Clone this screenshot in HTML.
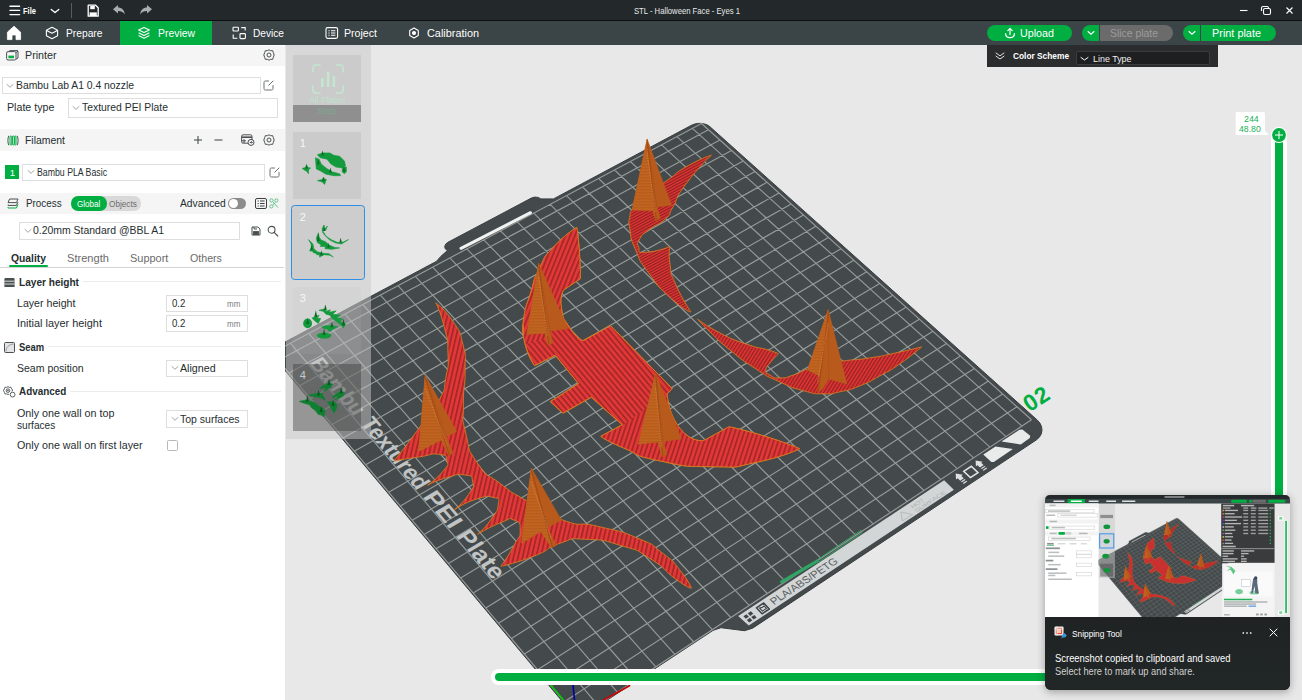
<!DOCTYPE html>
<html lang="en">
<head>
<meta charset="utf-8">
<title>STL - Halloween Face - Eyes 1</title>
<style>
*{box-sizing:border-box;margin:0;padding:0}
html,body{width:1302px;height:700px;overflow:hidden;background:#e8e8e8;font-family:"Liberation Sans",sans-serif;color:#262e30}
.abs{position:absolute}
#titlebar{position:absolute;left:0;top:0;width:1302px;height:21px;background:#23292b;border-bottom:1px solid #0c0e0f}
#tabbar{position:absolute;left:0;top:21px;width:1302px;height:24px;background:#3b4446}
#tabbar .tab{position:absolute;top:0;height:24px;line-height:24px;color:#fff;font-size:11.5px;white-space:nowrap}
#sidebar{position:absolute;left:0;top:45px;width:285px;height:655px;background:#fff}
#sideline{position:absolute;left:284px;top:45px;width:1px;height:655px;background:#fdfdfd}
#canvas{position:absolute;left:285px;top:45px;width:1017px;height:655px;background:#e8e8e8;overflow:hidden}
.hdr{position:absolute;left:0;width:285px;background:#f5f5f5}
.t{position:absolute;white-space:nowrap;font-size:11.5px;line-height:14px;color:#262e30}
.b{font-weight:bold}
.box{position:absolute;border:1px solid #dedede;background:#fff}
.g{color:#6b6b6b}
svg{position:absolute;overflow:visible}
</style>
</head>
<body>
<div id="titlebar"></div><div id="tabbar"></div>
<svg width="30" height="21" style="left:0;top:0" viewBox="0 0 30 21"><g stroke="#fff" stroke-width="1.4" stroke-linecap="round"><path d="M10 6.2H19.6M10 10.4H19.6M10 14.6H19.6"/></g></svg>
<div class="t" style="left:22.5px;top:4.9px;font-size:9.5px;line-height:12px;transform:scaleX(0.794);transform-origin:0 50%;font-weight:bold;color:#ffffff;">File</div>
<svg width="12" height="8" style="left:49px;top:7px" viewBox="0 0 12 8"><path d="M2.2 2.4L6 5.6L9.800 2.4" stroke="#fff" stroke-width="1.3" fill="none" stroke-linecap="round" stroke-linejoin="round"/></svg>
<div class="abs" style="left:71px;top:3px;width:1px;height:15px;background:#555d5f"></div>
<svg width="14" height="14" style="left:86px;top:4px" viewBox="0 0 14 14"><path d="M2.2 1.2H9.6L12.2 3.8V12.2H2.2Z" fill="none" stroke="#fff" stroke-width="1.3" stroke-linejoin="round"/><rect x="4.2" y="1.8" width="4.6" height="3.4" fill="#fff"/><rect x="3.6" y="8.4" width="7.2" height="3.6" fill="#fff"/></svg>
<svg width="14" height="12" style="left:112px;top:4px" viewBox="0 0 14 12"><path d="M1 5.2L6 1V3.6C9.6 3.6 12.4 5.8 12.8 10.4C11.2 7.8 9 7 6 7V9.6Z" fill="#a9afb1"/></svg>
<svg width="14" height="12" style="left:139px;top:4px" viewBox="0 0 14 12"><path d="M13 5.2L8 1V3.6C4.4 3.6 1.6 5.8 1.2 10.4C2.8 7.8 5 7 8 7V9.6Z" fill="#a9afb1"/></svg>
<div class="t" style="left:634.0px;top:4.9px;font-size:9.5px;line-height:12px;transform:scaleX(0.808);transform-origin:0 50%;color:#e8eaea;">STL - Halloween Face - Eyes 1</div>
<svg width="70" height="21" style="left:1232px;top:0" viewBox="0 0 70 21"><g stroke="#fff" stroke-width="1.1" fill="none"><path d="M8 10.5H15.5"/><rect x="31.5" y="8.5" width="7" height="6" rx="1.5"/><path d="M29.5 11V8C29.5 7 30 6.5 31 6.5H35C36 6.500 36.500 7 36.500 8"/><path d="M54.500 7.500L60.500 13.500M60.500 7.500L54.500 13.500"/></g></svg>
<svg width="16" height="16" style="left:6px;top:25px" viewBox="0 0 16 16"><path d="M8 1.200L14.600 7.200V14.600H10V10H6V14.600H1.400V7.200Z" fill="#fff" stroke="#fff" stroke-width="0.800" stroke-linejoin="round"/></svg>
<svg width="14" height="14" style="left:45px;top:26px" viewBox="0 0 14 14"><g fill="none" stroke="#fff" stroke-width="1.100" stroke-linejoin="round"><path d="M7 1.300L12.600 4.200V9.800L7 12.700L1.400 9.800V4.200Z"/><path d="M1.600 4.400L7 7.200L12.400 4.400"/></g></svg>
<div class="t" style="left:65.5px;top:25.9px;font-size:11.5px;line-height:15px;transform:scaleX(0.892);transform-origin:0 50%;color:#ffffff;">Prepare</div>
<div class="abs" style="left:120px;top:21px;width:92px;height:24px;background:#00ae42"></div>
<svg width="14" height="14" style="left:137px;top:26px" viewBox="0 0 14 14"><g fill="none" stroke="#fff" stroke-width="1.100" stroke-linejoin="round"><path d="M7 1.400L12.400 4L7 6.600L1.600 4Z"/><path d="M1.600 6.800L7 9.400L12.400 6.800"/><path d="M1.600 9.600L7 12.200L12.400 9.600"/></g></svg>
<div class="t" style="left:157.5px;top:25.9px;font-size:11.5px;line-height:15px;transform:scaleX(0.905);transform-origin:0 50%;color:#ffffff;">Preview</div>
<svg width="15" height="14" style="left:232px;top:26px" viewBox="0 0 15 14"><g fill="none" stroke="#fff" stroke-width="1.100"><rect x="1" y="1.200" width="5.400" height="3.800" rx="0.800"/><rect x="8" y="7.600" width="5.400" height="5" rx="0.800"/><path d="M9.200 1.600H13.200V4.600M1.200 8.400V12.200H5.400"/></g></svg>
<div class="t" style="left:252.5px;top:25.9px;font-size:11.5px;line-height:15px;transform:scaleX(0.882);transform-origin:0 50%;color:#ffffff;">Device</div>
<svg width="14" height="14" style="left:325px;top:26px" viewBox="0 0 14 14"><g fill="none" stroke="#fff" stroke-width="1.100"><rect x="1" y="1.600" width="11.600" height="10.800" rx="1.600"/><path d="M3.400 4.800H4.600M6 4.800H10.400M3.400 7H4.600M6 7H10.400M3.400 9.200H4.600M6 9.200H10.400"/></g></svg>
<div class="t" style="left:343.5px;top:25.9px;font-size:11.5px;line-height:15px;transform:scaleX(0.922);transform-origin:0 50%;color:#ffffff;">Project</div>
<svg width="12" height="12" style="left:408px;top:27px" viewBox="0 0 12 12"><g fill="none" stroke="#fff" stroke-width="1.100"><path d="M6 1L10.300 3.500V8.500L6 11L1.700 8.500V3.500Z" stroke-linejoin="round"/><circle cx="6" cy="6" r="1.500" fill="#fff"/></g></svg>
<div class="t" style="left:426.5px;top:25.9px;font-size:11.5px;line-height:15px;transform:scaleX(0.946);transform-origin:0 50%;color:#ffffff;">Calibration</div>
<div class="abs" style="left:987px;top:25px;width:85px;height:16px;border-radius:8px;background:#00ae42"></div>
<svg width="12" height="12" style="left:1004px;top:27px" viewBox="0 0 12 12"><g fill="none" stroke="#fff" stroke-width="1.200" stroke-linecap="round" stroke-linejoin="round"><path d="M6 7.500V1.600M3.800 3.600L6 1.400L8.200 3.600"/><path d="M1.600 6.500C1.600 9.200 3.400 10.600 6 10.600C8.600 10.600 10.400 9.200 10.400 6.500"/></g></svg>
<div class="t" style="left:1019.5px;top:25.9px;font-size:11.5px;line-height:15px;transform:scaleX(0.933);transform-origin:0 50%;color:#ffffff;">Upload</div>
<div class="abs" style="left:1082px;top:25px;width:17px;height:16px;border-radius:8px 0 0 8px;background:#00ae42"></div>
<svg width="8" height="6" style="left:1087px;top:30px" viewBox="0 0 8 6"><path d="M1 1.500L4 4.200L7 1.500" stroke="#fff" stroke-width="1.100" fill="none" stroke-linecap="round"/></svg>
<div class="abs" style="left:1100px;top:25px;width:73px;height:16px;border-radius:0 8px 8px 0;background:#6b6b6b"></div>
<div class="t" style="left:1109.5px;top:25.9px;font-size:11.5px;line-height:15px;transform:scaleX(0.905);transform-origin:0 50%;color:#9c9c9c;">Slice plate</div>
<div class="abs" style="left:1183px;top:25px;width:17px;height:16px;border-radius:8px 0 0 8px;background:#00ae42"></div>
<svg width="8" height="6" style="left:1188px;top:30px" viewBox="0 0 8 6"><path d="M1 1.500L4 4.200L7 1.500" stroke="#fff" stroke-width="1.100" fill="none" stroke-linecap="round"/></svg>
<div class="abs" style="left:1201px;top:25px;width:75px;height:16px;border-radius:0 8px 8px 0;background:#00ae42"></div>
<div class="t" style="left:1211.5px;top:25.9px;font-size:11.5px;line-height:15px;transform:scaleX(0.946);transform-origin:0 50%;color:#ffffff;">Print plate</div>
<div id="sidebar"></div>
<div class="hdr" style="top:46px;height:20px"></div>
<svg width="13" height="11" style="left:6px;top:49.500px" viewBox="0 0 13 11"><g fill="none" stroke="#4a5052" stroke-width="1"><rect x="0.600" y="1.600" width="9.400" height="8.400" rx="1.500"/><path d="M10 2.600L12 1.200V8L10 9.200"/><path d="M2.600 1.600L4 0.600H12"/></g><rect x="2.400" y="5.600" width="5.600" height="2.600" fill="#00ae42"/></svg>
<div class="t" style="left:24.5px;top:47.6px;font-size:11.5px;line-height:15px;transform:scaleX(0.930);transform-origin:0 50%;">Printer</div>
<svg width="12" height="12" style="left:263px;top:48.7px" viewBox="0 0 12 12"><g fill="none" stroke="#4a5052" stroke-width="1"><path d="M6 0.800L7.700 1.700L9.700 1.700L10.300 3.600L11.200 6L10.300 8.400L9.700 10.300L7.700 10.300L6 11.200L4.300 10.300L2.300 10.300L1.700 8.400L0.800 6L1.700 3.600L2.300 1.700L4.300 1.700Z" stroke-linejoin="round"/><circle cx="6" cy="6" r="2"/></g></svg>
<div class="box" style="left:2px;top:77px;width:259px;height:17px;"></div>
<svg width="8" height="6" style="left:6px;top:82.5px" viewBox="0 0 8 6"><path d="M1 1.500L4 4.300L7 1.500" stroke="#9a9a9a" stroke-width="0.9" fill="none" stroke-linecap="round"/></svg>
<div class="t" style="left:16.0px;top:78.3px;font-size:11.5px;line-height:15px;transform:scaleX(0.900);transform-origin:0 50%;">Bambu Lab A1 0.4 nozzle</div>
<svg width="11" height="11" style="left:263px;top:80px" viewBox="0 0 11 11"><g fill="none" stroke="#6a7072" stroke-width="1" stroke-linecap="round"><path d="M5.500 1H2.500C1.500 1 1 1.500 1 2.500V8.500C1 9.500 1.500 10 2.500 10H8.500C9.500 10 10 9.500 10 8.500V5.500"/><path d="M5.800 5.200L10 1"/></g></svg>
<div class="t" style="left:6.7px;top:100.4px;font-size:11.5px;line-height:15px;transform:scaleX(0.927);transform-origin:0 50%;">Plate type</div>
<div class="box" style="left:67.5px;top:97.5px;width:210.5px;height:20px;"></div>
<svg width="8" height="6" style="left:72px;top:104.5px" viewBox="0 0 8 6"><path d="M1 1.500L4 4.300L7 1.500" stroke="#9a9a9a" stroke-width="0.9" fill="none" stroke-linecap="round"/></svg>
<div class="t" style="left:82.4px;top:100.4px;font-size:11.5px;line-height:15px;transform:scaleX(0.903);transform-origin:0 50%;">Textured PEI Plate</div>
<div class="hdr" style="top:129px;height:22px"></div>
<svg width="12" height="11" style="left:6.500px;top:134.500px" viewBox="0 0 12 11"><g fill="none" stroke-width="1"><path d="M1.800 0.800C0.600 3 0.600 8 1.800 10.200M10.200 0.800C11.400 3 11.400 8 10.200 10.200" stroke="#4a5052"/><rect x="3" y="1" width="1.800" height="9" rx="0.900" stroke="#00ae42"/><rect x="5.400" y="1" width="1.800" height="9" rx="0.900" stroke="#00ae42"/><rect x="7.700" y="1" width="1.300" height="9" rx="0.600" stroke="#00ae42"/></g></svg>
<div class="t" style="left:24.5px;top:132.7px;font-size:11.5px;line-height:15px;transform:scaleX(0.907);transform-origin:0 50%;">Filament</div>
<svg width="30" height="10" style="left:193px;top:135px" viewBox="0 0 30 10"><g stroke="#3a4042" stroke-width="1"><path d="M1 5H9M5 1V9M21.500 5H29.500"/></g></svg>
<svg width="14" height="12" style="left:241px;top:134px" viewBox="0 0 14 12"><g fill="none" stroke="#4a5052" stroke-width="1"><rect x="0.600" y="0.800" width="10.400" height="8.400" rx="1.500"/><path d="M0.600 3.200H11" stroke-width="1.600"/><path d="M3 5.200V9M0.800 6.800H5"/><circle cx="10" cy="8.400" r="3" fill="#f5f5f5"/><path d="M8.800 8.400H11.200M10.400 7.400L11.300 8.400L10.400 9.400"/></g></svg>
<svg width="12" height="12" style="left:263px;top:134px" viewBox="0 0 12 12"><g fill="none" stroke="#4a5052" stroke-width="1"><path d="M6 0.800L7.700 1.700L9.700 1.700L10.300 3.600L11.200 6L10.300 8.400L9.700 10.300L7.700 10.300L6 11.200L4.300 10.300L2.300 10.300L1.700 8.400L0.800 6L1.700 3.600L2.300 1.700L4.300 1.700Z" stroke-linejoin="round"/><circle cx="6" cy="6" r="2"/></g></svg>
<div class="abs" style="left:5px;top:165px;width:14px;height:14px;background:#00ae42"></div>
<div class="t" style="left:9.8px;top:166.7px;font-size:9.5px;line-height:12px;color:#fff;">1</div>
<div class="box" style="left:22px;top:163.5px;width:243px;height:17px;"></div>
<svg width="8" height="6" style="left:26.5px;top:169px" viewBox="0 0 8 6"><path d="M1 1.500L4 4.300L7 1.500" stroke="#9a9a9a" stroke-width="0.9" fill="none" stroke-linecap="round"/></svg>
<div class="t" style="left:36.7px;top:165.4px;font-size:10.5px;line-height:14px;transform:scaleX(0.833);transform-origin:0 50%;">Bambu PLA Basic</div>
<svg width="11" height="11" style="left:268.5px;top:166.5px" viewBox="0 0 11 11"><g fill="none" stroke="#6a7072" stroke-width="1" stroke-linecap="round"><path d="M5.500 1H2.500C1.500 1 1 1.500 1 2.500V8.500C1 9.500 1.500 10 2.500 10H8.500C9.500 10 10 9.500 10 8.500V5.500"/><path d="M5.800 5.200L10 1"/></g></svg>
<div class="hdr" style="top:193px;height:20.500px"></div>
<svg width="12" height="11" style="left:7px;top:197.500px" viewBox="0 0 12 11"><g fill="none" stroke-width="1" stroke-linejoin="round"><path d="M2.600 1H11L9.400 4.600H1Z" stroke="#4a5052"/><path d="M1 6.600V7.400H9.400L11 4" stroke="#4a5052"/><path d="M1 9.200V10H9.400L11 6.400" stroke="#00ae42"/></g></svg>
<div class="t" style="left:25.6px;top:195.9px;font-size:11.5px;line-height:15px;transform:scaleX(0.857);transform-origin:0 50%;">Process</div>
<div class="abs" style="left:71px;top:196px;width:70px;height:14.500px;border-radius:7.250px;background:#d9d9d9"></div>
<div class="abs" style="left:71px;top:196px;width:36px;height:14.500px;border-radius:7.250px;background:#00ae42"></div>
<div class="t" style="left:77.3px;top:197.6px;font-size:9.5px;line-height:12px;transform:scaleX(0.852);transform-origin:0 50%;color:#fff;">Global</div>
<div class="t" style="left:108.5px;top:197.6px;font-size:9.5px;line-height:12px;transform:scaleX(0.863);transform-origin:0 50%;color:#6b6b6b;">Objects</div>
<div class="t" style="left:180.4px;top:195.9px;font-size:11.5px;line-height:15px;transform:scaleX(0.894);transform-origin:0 50%;">Advanced</div>
<div class="abs" style="left:227.500px;top:198px;width:18.500px;height:11px;border-radius:5.500px;background:#8c8c8c"></div>
<div class="abs" style="left:228.500px;top:199px;width:9px;height:9px;border-radius:4.500px;background:#fff"></div>
<svg width="12" height="11" style="left:255px;top:198px" viewBox="0 0 12 11"><g fill="none" stroke="#3a4042" stroke-width="1"><rect x="0.500" y="0.500" width="11" height="10" rx="1.500"/><path d="M2.600 3H3.800M5 3H9.600M2.600 5.500H3.800M5 5.500H9.600M2.600 8H3.800M5 8H9.600"/></g></svg>
<svg width="10" height="11" style="left:269px;top:198px" viewBox="0 0 10 11"><g fill="none" stroke="#58be80" stroke-width="0.900"><circle cx="2.400" cy="2.400" r="1.600"/><circle cx="7.400" cy="2.400" r="1.600"/><circle cx="2.400" cy="8.400" r="1.600"/><path d="M4 4L9 9.600M6 4.400L4 7"/></g></svg>
<div class="box" style="left:19.4px;top:221.5px;width:220.6px;height:18px;"></div>
<svg width="8" height="6" style="left:23.5px;top:227.5px" viewBox="0 0 8 6"><path d="M1 1.500L4 4.300L7 1.500" stroke="#9a9a9a" stroke-width="0.9" fill="none" stroke-linecap="round"/></svg>
<div class="t" style="left:33.4px;top:223.4px;font-size:11.5px;line-height:15px;transform:scaleX(0.908);transform-origin:0 50%;">0.20mm Standard @BBL A1</div>
<svg width="10" height="10" style="left:251px;top:226px" viewBox="0 0 10 10"><g fill="none" stroke="#4a5052" stroke-width="1"><path d="M1 1H7L9 3V9H1Z" stroke-linejoin="round"/><rect x="2.600" y="5.600" width="4.800" height="3" fill="#4a5052"/><path d="M3 1.200V3H6"/></g></svg>
<svg width="12" height="12" style="left:267px;top:225px" viewBox="0 0 12 12"><g fill="none" stroke="#4a5052" stroke-width="1.100" stroke-linecap="round"><circle cx="4.600" cy="4.800" r="3.400"/><path d="M7.200 7.400L10.800 11"/></g></svg>
<div class="t" style="left:10.7px;top:250.6px;font-size:11.5px;line-height:15px;transform:scaleX(0.898);transform-origin:0 50%;font-weight:bold;">Quality</div>
<div class="abs" style="left:9px;top:264.500px;width:39px;height:2.200px;background:#00ae42;border-radius:1px"></div>
<div class="t" style="left:66.8px;top:250.6px;font-size:11.5px;line-height:15px;transform:scaleX(0.964);transform-origin:0 50%;color:#6b6b6b;">Strength</div>
<div class="t" style="left:129.8px;top:250.6px;font-size:11.5px;line-height:15px;transform:scaleX(0.953);transform-origin:0 50%;color:#6b6b6b;">Support</div>
<div class="t" style="left:190.4px;top:250.6px;font-size:11.5px;line-height:15px;transform:scaleX(0.924);transform-origin:0 50%;color:#6b6b6b;">Others</div>
<div class="abs" style="left:0;top:267px;width:284px;height:1px;background:#d4d4d4"></div>
<svg width="11" height="11" style="left:4px;top:276.500px" viewBox="0 0 11 11"><path d="M1.500 1H9.500C10.300 1 10.600 1.600 10.600 2.400V10H0.400V2.400C0.400 1.600 0.700 1 1.500 1Z" fill="#4a5052"/><path d="M0.400 4.200H10.600M0.400 7H10.600" stroke="#fff" stroke-width="0.800"/></svg>
<div class="t" style="left:18.5px;top:274.7px;font-size:11.5px;line-height:15px;transform:scaleX(0.877);transform-origin:0 50%;font-weight:bold;">Layer height</div>
<div class="abs" style="left:82.500px;top:281px;width:198.500px;height:1px;background:#ececec"></div>
<div class="t" style="left:16.9px;top:295.8px;font-size:11.5px;line-height:15px;transform:scaleX(0.923);transform-origin:0 50%;">Layer height</div>
<div class="box" style="left:166px;top:294.5px;width:81.5px;height:17px;"></div>
<div class="t" style="left:171.5px;top:295.9px;font-size:11.5px;line-height:15px;transform:scaleX(0.838);transform-origin:0 50%;">0.2</div>
<div class="t" style="left:227.2px;top:298.9px;font-size:8.5px;line-height:11px;transform:scaleX(0.939);transform-origin:0 50%;color:#7a7a7a;">mm</div>
<div class="t" style="left:16.9px;top:316.3px;font-size:11.5px;line-height:15px;transform:scaleX(0.949);transform-origin:0 50%;">Initial layer height</div>
<div class="box" style="left:166px;top:314.8px;width:81.5px;height:17px;"></div>
<div class="t" style="left:171.5px;top:316.3px;font-size:11.5px;line-height:15px;transform:scaleX(0.838);transform-origin:0 50%;">0.2</div>
<div class="t" style="left:227.2px;top:319.3px;font-size:8.5px;line-height:11px;transform:scaleX(0.939);transform-origin:0 50%;color:#7a7a7a;">mm</div>
<svg width="11" height="11" style="left:3.800px;top:341.500px" viewBox="0 0 11 11"><rect x="0.500" y="0.500" width="10" height="10" rx="1" fill="#e4e6e6" stroke="#4a5052"/><path d="M2 9.500C2 5 5 2.500 9.500 2" fill="none" stroke="#8a9092" stroke-width="0.900"/></svg>
<div class="t" style="left:18.5px;top:339.6px;font-size:11.5px;line-height:15px;transform:scaleX(0.821);transform-origin:0 50%;font-weight:bold;">Seam</div>
<div class="abs" style="left:48px;top:346px;width:233px;height:1px;background:#ececec"></div>
<div class="t" style="left:16.9px;top:361.2px;font-size:11.5px;line-height:15px;transform:scaleX(0.914);transform-origin:0 50%;">Seam position</div>
<div class="box" style="left:166px;top:359.5px;width:81.5px;height:17.5px;"></div>
<svg width="8" height="6" style="left:170.6px;top:365.3px" viewBox="0 0 8 6"><path d="M1 1.500L4 4.300L7 1.500" stroke="#9a9a9a" stroke-width="0.9" fill="none" stroke-linecap="round"/></svg>
<div class="t" style="left:180.4px;top:361.2px;font-size:11.5px;line-height:15px;transform:scaleX(0.928);transform-origin:0 50%;">Aligned</div>
<svg width="13" height="12" style="left:3px;top:385.500px" viewBox="0 0 13 12"><g fill="none" stroke="#4a5052" stroke-width="0.900"><path d="M5 0.600L6.400 1.400L8 1.200L8.600 2.800L9.600 4L9 5.400M5 0.600L3.600 1.400L2 1.200L1.400 2.800L0.500 4.600L1.400 6.400L2 8L3.600 7.800L5 8.600L6 8" stroke-linejoin="round"/><circle cx="5" cy="4.600" r="1.800"/><circle cx="5" cy="4.600" r="0.500"/><circle cx="9.600" cy="8.600" r="2.400"/></g></svg>
<div class="t" style="left:19.2px;top:384.1px;font-size:11.5px;line-height:15px;transform:scaleX(0.859);transform-origin:0 50%;font-weight:bold;">Advanced</div>
<div class="abs" style="left:70px;top:390.500px;width:211px;height:1px;background:#ececec"></div>
<div class="t" style="left:16.9px;top:406.0px;font-size:11.5px;line-height:15px;transform:scaleX(0.935);transform-origin:0 50%;">Only one wall on top</div>
<div class="t" style="left:16.9px;top:418.2px;font-size:11.5px;line-height:15px;transform:scaleX(0.881);transform-origin:0 50%;">surfaces</div>
<div class="box" style="left:166px;top:410.2px;width:81.5px;height:17.5px;"></div>
<svg width="8" height="6" style="left:170.6px;top:416px" viewBox="0 0 8 6"><path d="M1 1.500L4 4.300L7 1.500" stroke="#9a9a9a" stroke-width="0.9" fill="none" stroke-linecap="round"/></svg>
<div class="t" style="left:180.4px;top:411.9px;font-size:11.5px;line-height:15px;transform:scaleX(0.913);transform-origin:0 50%;">Top surfaces</div>
<div class="t" style="left:16.9px;top:438.3px;font-size:11.5px;line-height:15px;transform:scaleX(0.931);transform-origin:0 50%;">Only one wall on first layer</div>
<div class="box" style="left:166.5px;top:440.2px;width:11.3px;height:11px;border-color:#b8b8b8;border-radius:1.500px"></div>
<div id="canvas">
<svg width="1302" height="700" viewBox="0 0 1302 700" style="left:-285px;top:-45px">
<g id="geo"><polygon points="710.0,126.8 707.6,125.1 704.6,124.0 701.3,123.4 697.8,123.4 694.4,124.1 691.4,125.3 553.5,198.9 540.9,198.9 538.2,197.4 534.7,197.1 531.3,198.1 447.9,242.3 445.6,244.2 444.7,246.6 445.3,248.9 447.4,250.6 440.8,256.4 436.4,261.4 274.1,347.9 271.8,349.9 270.9,352.3 271.7,354.6 574.8,716.3 581.5,717.0 713.0,630.4 720.9,627.7 744.5,630.7 752.6,628.2 1036.1,440.1 1039.2,437.4 1041.2,434.1 1042.0,430.4 1041.6,426.7 1039.9,423.1 1037.1,419.9" fill="#44494b" stroke="#3a3f41" stroke-width="1" stroke-linejoin="round"/>
<polygon points="738.2,615.9 944.1,480.3 953.9,489.7 748.7,625.6" fill="#d3d6d6"/>
<polygon points="745.8,618.8 748.9,616.7 746.5,614.2 743.4,616.2" fill="#3f4446"/>
<polygon points="750.2,615.9 753.3,613.8 750.9,611.3 747.8,613.3" fill="#3f4446"/>
<polygon points="749.2,622.5 752.3,620.4 749.9,617.8 746.8,619.9" fill="#3f4446"/>
<polygon points="753.6,619.5 756.7,617.5 754.3,614.9 751.2,617.0" fill="#3f4446"/>
<polygon points="762.0,613.8 769.3,609.0 763.7,603.0 756.4,607.8" fill="none" stroke="#3f4446" stroke-width="1.5" stroke-linejoin="round"/>
<polygon points="762.4,607.3 764.2,606.0 766.5,608.5 762.4,611.1 759.6,608.1" fill="none" stroke="#3f4446" stroke-width="1.1"/>
<polygon points="900.9,512.0 912.6,514.5 902.4,521.0" fill="none" stroke="#b4b8b8" stroke-width="0.9"/>
<polygon points="956.0,479.4 955.7,473.6 963.0,474.8 961.3,475.9 963.8,478.2 960.2,480.7 957.7,478.3" fill="#dfe1e1"/><polygon points="961.0,481.5 964.7,479.1 965.5,479.9 961.9,482.3" fill="#dfe1e1"/><polygon points="962.8,483.1 966.4,480.7 967.3,481.5 963.7,483.9" fill="#dfe1e1"/>
<polygon points="975.9,466.3 975.6,460.5 982.8,461.7 981.2,462.8 983.6,465.1 980.0,467.5 977.6,465.2" fill="#dfe1e1"/><polygon points="980.9,468.3 984.5,465.9 985.4,466.8 981.8,469.1" fill="#dfe1e1"/><polygon points="982.7,469.9 986.3,467.6 987.1,468.4 983.6,470.8" fill="#dfe1e1"/>
<polygon points="970.4,477.6 978.0,472.6 971.3,466.3 963.7,471.3" fill="none" stroke="#e4e6e6" stroke-width="1.5"/>
<polygon points="983.3,454.5 995.5,446.5 1012.9,449.0 993.8,462.1 991.3,461.9" fill="#e9eaea"/>
<polygon points="1001.5,441.6 1019.5,429.8 1022.4,429.4 1030.2,435.7 1029.8,438.1 1020.8,444.5" fill="#e9eaea"/>
<path d="M578.0 718.0L272.0 353.0M578.0 718.0L1031.5 419.8M597.7 705.0L290.4 343.2M564.4 701.7L1017.0 406.8M617.3 692.2L308.7 333.4M550.9 685.7L1002.6 393.9M636.6 679.5L326.9 323.7M537.6 669.8L988.4 381.1M655.8 666.8L344.9 314.1M524.4 654.1L974.3 368.5M674.8 654.3L362.7 304.5M511.4 638.5L960.4 356.0M693.7 642.0L380.4 295.1M498.5 623.2L946.6 343.6M712.3 629.7L398.0 285.7M485.8 608.0L933.0 331.3M730.8 617.5L415.4 276.4M473.2 592.9L919.4 319.2M749.2 605.4L432.7 267.1M460.7 578.1L906.0 307.2M767.3 593.5L449.9 257.9M448.4 563.4L892.8 295.3M785.4 581.6L466.9 248.8M436.2 548.8L879.7 283.5M803.2 569.9L483.8 239.8M424.1 534.4L866.7 271.8M820.9 558.3L500.6 230.8M412.2 520.2L853.8 260.2M838.5 546.7L517.3 221.9M400.4 506.1L841.0 248.8M855.9 535.3L533.8 213.1M388.7 492.2L828.4 237.4M873.1 523.9L550.2 204.4M377.1 478.4L815.9 226.2M890.2 512.7L566.5 195.7M365.7 464.7L803.5 215.1M907.2 501.5L582.6 187.0M354.3 451.2L791.2 204.0M924.0 490.5L598.6 178.5M343.1 437.9L779.0 193.1M940.7 479.5L614.6 170.0M332.1 424.6L767.0 182.3M957.2 468.6L630.3 161.5M321.1 411.5L755.0 171.6M973.6 457.9L646.0 153.1M310.2 398.6L743.2 160.9M989.9 447.2L661.6 144.8M299.5 385.8L731.5 150.4M1006.0 436.6L677.0 136.6M288.8 373.1L719.9 140.0M1022.0 426.1L692.4 128.4M278.3 360.5L708.4 129.7M1031.5 419.8L701.5 123.5M272.0 353.0L701.5 123.5" stroke="#959b99" stroke-width="1.15" fill="none"/>
<path d="M461 248.300L530.500 212.700" stroke="#f2f2f2" stroke-width="3" stroke-linecap="round"/></g><text transform="matrix(1.0878 1.2804 -1.8538 1.0186 331.2 389.9)" text-anchor="middle" font-size="10.6" fill="#c0c4c4" font-weight="bold" textLength="42" lengthAdjust="spacingAndGlyphs" font-family="Liberation Sans, sans-serif">Bambu</text>
<text transform="matrix(1.1465 1.3495 -1.8792 1.0739 388.3 457.1)" text-anchor="middle" font-size="10.6" fill="#c0c4c4" font-weight="bold" textLength="50.3" lengthAdjust="spacingAndGlyphs" font-family="Liberation Sans, sans-serif">Textured</text>
<text transform="matrix(1.1969 1.4088 -1.8996 1.1214 436.2 513.4)" text-anchor="middle" font-size="10.6" fill="#c0c4c4" font-weight="bold" textLength="23.6" lengthAdjust="spacingAndGlyphs" font-family="Liberation Sans, sans-serif">PEI</text>
<text transform="matrix(1.2378 1.4570 -1.9151 1.1600 474.3 558.4)" text-anchor="middle" font-size="10.6" fill="#c0c4c4" font-weight="bold" textLength="30.7" lengthAdjust="spacingAndGlyphs" font-family="Liberation Sans, sans-serif">Plate</text>
<text transform="matrix(1.7861 -1.1815 1.4300 1.4838 806.4 583.8)" text-anchor="middle" font-size="5.2" fill="#565c5e" font-weight="normal" textLength="36.2" lengthAdjust="spacingAndGlyphs" font-family="Liberation Sans, sans-serif">PLA/ABS/PETG</text>
<text transform="matrix(1.6856 -1.1131 1.4477 1.3984 919.0 504.8)" text-anchor="middle" font-size="2.9" fill="#aeb2b2" font-weight="normal" textLength="7.1" lengthAdjust="spacingAndGlyphs" font-family="Liberation Sans, sans-serif">HOT</text>
<text transform="matrix(1.6789 -1.1114 1.4534 1.3964 931.8 502.9)" text-anchor="middle" font-size="2.9" fill="#aeb2b2" font-weight="normal" textLength="17.9" lengthAdjust="spacingAndGlyphs" font-family="Liberation Sans, sans-serif">SURFACE</text>
<text transform="translate(1029.500 412.500) rotate(-33)" letter-spacing="0.600" font-size="23" font-weight="bold" fill="#00ae42" font-family="Liberation Sans, sans-serif">02</text><g id="geo2"><defs>
<pattern id="hA" width="2.5" height="2.5" patternUnits="userSpaceOnUse" patternTransform="rotate(-28)"><rect width="2.5" height="2.5" fill="#e23535"/><rect width="2.5" height="1.125" fill="#8a1f1f"/></pattern>
<pattern id="hC" width="3" height="3" patternUnits="userSpaceOnUse" patternTransform="rotate(-58)"><rect width="3" height="3" fill="#e13535"/><rect width="3" height="1.26" fill="#922121"/></pattern>
<pattern id="hB" width="4.4" height="4.4" patternUnits="userSpaceOnUse" patternTransform="rotate(50)"><rect width="4.4" height="4.4" fill="#e23838"/><rect width="4.4" height="1.848" fill="#a82727"/></pattern>
<pattern id="hD" width="4.4" height="4.4" patternUnits="userSpaceOnUse" patternTransform="rotate(-77)"><rect width="4.4" height="4.4" fill="#e23838"/><rect width="4.4" height="1.848" fill="#a82727"/></pattern>
<pattern id="hB1" width="4.4" height="4.4" patternUnits="userSpaceOnUse" patternTransform="rotate(-68)"><rect width="4.4" height="4.4" fill="#e23838"/><rect width="4.4" height="1.848" fill="#a82727"/></pattern>
<pattern id="hB3" width="4.4" height="4.4" patternUnits="userSpaceOnUse" patternTransform="rotate(-72)"><rect width="4.4" height="4.4" fill="#e23838"/><rect width="4.4" height="1.848" fill="#a82727"/></pattern>
<pattern id="hT" width="1.5" height="1.5" patternUnits="userSpaceOnUse" patternTransform="rotate(0)"><rect width="1.5" height="1.5" fill="#c96a25"/><rect width="1.5" height="0.75" fill="#ad5417"/></pattern>
</defs>
<path d="M711.4 155.1C711.4 155.1 698.5 167.0 685.7 184.3C672.9 201.6 679.6 195.7 672.9 207.1C666.2 218.5 673.8 211.0 665.7 218.6C657.6 226.2 657.2 223.3 648.6 230.0C640.0 236.7 643.3 232.9 640.0 238.6C636.7 244.3 636.7 242.5 638.6 247.1C640.5 251.7 635.2 252.5 645.7 252.3C656.2 252.1 670.0 246.6 670.0 246.6C670.0 246.6 668.1 251.7 670.0 264.3C671.9 276.9 668.7 268.4 675.7 284.3C682.7 300.2 690.9 312.0 690.9 312.0C690.9 312.0 685.5 311.6 671.4 298.6C657.3 285.6 660.5 289.1 648.6 272.9C636.7 256.7 641.9 264.3 635.7 250.0C629.5 235.7 631.9 241.4 630.0 230.0C628.1 218.6 629.0 222.8 630.0 215.7C631.0 208.6 628.6 215.3 632.9 208.6C637.2 201.9 632.0 204.8 642.9 195.7C653.8 186.6 651.4 190.9 665.7 181.4C680.0 171.9 670.5 175.9 685.7 167.1C700.9 158.3 711.4 155.1 711.4 155.1Z" fill="url(#hA)" stroke="#d8791f" stroke-width="0.9"/>
<path d="M697.6 319.0C697.6 319.0 703.8 324.6 719.9 332.9C736.0 341.2 729.9 338.2 745.9 343.9C761.9 349.6 757.1 346.6 767.9 349.9C778.7 353.2 778.4 353.9 778.4 353.9C778.4 353.9 775.1 356.6 770.9 361.9C766.7 367.2 766.2 365.6 765.9 369.9C765.6 374.2 765.3 372.2 769.9 374.9C774.5 377.6 771.8 377.9 779.8 377.9C787.8 377.9 784.5 377.9 793.8 374.9C803.1 371.9 797.1 372.6 807.8 368.9C818.5 365.2 813.8 366.6 825.8 363.9C837.8 361.2 829.1 362.9 843.7 360.9C858.3 358.9 852.4 360.6 869.7 357.9C887.0 355.2 878.4 356.6 895.7 352.9C913.0 349.2 921.6 346.9 921.6 346.9C921.6 346.9 913.7 354.2 899.7 363.9C885.7 373.6 893.0 368.6 879.7 375.9C866.4 383.2 873.0 380.6 859.7 385.9C846.4 391.2 851.8 389.2 839.8 391.8C827.8 394.4 835.8 394.1 823.8 393.8C811.8 393.5 818.5 394.8 803.8 390.8C789.1 386.8 795.8 389.2 779.8 381.9C763.8 374.6 772.5 379.6 755.9 368.9C739.3 358.2 745.2 362.2 729.9 349.9C714.6 337.6 720.8 342.2 710.0 331.9C699.2 321.6 697.6 319.0 697.6 319.0Z" fill="url(#hC)" stroke="#d8791f" stroke-width="0.9"/>
<clipPath id="cB"><path d="M576.8 227.5C576.8 227.5 578.1 233.7 579.3 250.7C580.5 267.7 580.4 278.6 580.4 278.6C580.4 278.6 563.6 290.0 563.6 290.0C563.6 290.0 559.4 295.4 561.4 307.9C563.4 320.4 562.4 316.6 569.6 327.5C576.8 338.4 582.9 340.7 582.9 340.7C582.9 340.7 610.6 325.7 610.6 325.7C610.6 325.7 672.3 388.7 672.3 388.7C672.3 388.7 667.2 393.9 667.2 393.9C667.2 393.9 667.7 413.2 680.1 428.6C692.5 444.0 704.5 440.2 704.5 440.2C704.5 440.2 728.9 426.8 728.9 426.8C728.9 426.8 741.4 429.0 765.0 436.3C788.6 443.6 799.7 448.7 799.7 448.7C799.7 448.7 785.9 456.1 757.2 462.1C728.5 468.1 746.1 467.1 713.5 466.7C680.9 466.3 689.5 467.1 659.5 460.8C629.5 454.5 643.1 456.1 623.5 447.9C603.9 439.7 600.8 436.3 600.8 436.3C600.8 436.3 622.2 424.8 622.2 424.8C622.2 424.8 591.3 397.2 591.3 397.2C591.3 397.2 563.0 413.2 563.0 413.2C563.0 413.2 550.2 401.6 550.2 401.6C550.2 401.6 578.5 383.6 578.5 383.6C578.5 383.6 555.3 355.3 555.3 355.3C555.3 355.3 534.7 365.6 534.7 365.6C534.7 365.6 529.5 359.6 525.7 346.3C521.9 333.0 524.0 330.2 523.2 325.7C522.4 321.2 522.8 336.5 523.2 332.9C523.6 329.3 521.9 328.1 524.3 315.0C526.7 301.9 525.4 309.1 530.4 293.6C535.4 278.1 531.6 284.1 539.3 268.6C547.0 253.1 541.1 260.8 553.6 247.1C566.1 233.4 576.8 227.5 576.8 227.5Z"/></clipPath>
<path d="M576.8 227.5C576.8 227.5 578.1 233.7 579.3 250.7C580.5 267.7 580.4 278.6 580.4 278.6C580.4 278.6 563.6 290.0 563.6 290.0C563.6 290.0 559.4 295.4 561.4 307.9C563.4 320.4 562.4 316.6 569.6 327.5C576.8 338.4 582.9 340.7 582.9 340.7C582.9 340.7 610.6 325.7 610.6 325.7C610.6 325.7 672.3 388.7 672.3 388.7C672.3 388.7 667.2 393.9 667.2 393.9C667.2 393.9 667.7 413.2 680.1 428.6C692.5 444.0 704.5 440.2 704.5 440.2C704.5 440.2 728.9 426.8 728.9 426.8C728.9 426.8 741.4 429.0 765.0 436.3C788.6 443.6 799.7 448.7 799.7 448.7C799.7 448.7 785.9 456.1 757.2 462.1C728.5 468.1 746.1 467.1 713.5 466.7C680.9 466.3 689.5 467.1 659.5 460.8C629.5 454.5 643.1 456.1 623.5 447.9C603.9 439.7 600.8 436.3 600.8 436.3C600.8 436.3 622.2 424.8 622.2 424.8C622.2 424.8 591.3 397.2 591.3 397.2C591.3 397.2 563.0 413.2 563.0 413.2C563.0 413.2 550.2 401.6 550.2 401.6C550.2 401.6 578.5 383.6 578.5 383.6C578.5 383.6 555.3 355.3 555.3 355.3C555.3 355.3 534.7 365.6 534.7 365.6C534.7 365.6 529.5 359.6 525.7 346.3C521.9 333.0 524.0 330.2 523.2 325.7C522.4 321.2 522.8 336.5 523.2 332.9C523.6 329.3 521.9 328.1 524.3 315.0C526.7 301.9 525.4 309.1 530.4 293.6C535.4 278.1 531.6 284.1 539.3 268.6C547.0 253.1 541.1 260.8 553.6 247.1C566.1 233.4 576.8 227.5 576.8 227.5Z" fill="url(#hB)" stroke="#d8791f" stroke-width="0.9"/>
<g clip-path="url(#cB)"><polygon points="500,215 600,215 600,272 566,296 548,338 500,352" fill="url(#hB1)"/><polygon points="590,442 625,424 668,392 690,408 760,420 820,440 820,480 590,480" fill="url(#hB3)"/></g>
<path d="M576.8 227.5C576.8 227.5 578.1 233.7 579.3 250.7C580.5 267.7 580.4 278.6 580.4 278.6C580.4 278.6 563.6 290.0 563.6 290.0C563.6 290.0 559.4 295.4 561.4 307.9C563.4 320.4 562.4 316.6 569.6 327.5C576.8 338.4 582.9 340.7 582.9 340.7C582.9 340.7 610.6 325.7 610.6 325.7C610.6 325.7 672.3 388.7 672.3 388.7C672.3 388.7 667.2 393.9 667.2 393.9C667.2 393.9 667.7 413.2 680.1 428.6C692.5 444.0 704.5 440.2 704.5 440.2C704.5 440.2 728.9 426.8 728.9 426.8C728.9 426.8 741.4 429.0 765.0 436.3C788.6 443.6 799.7 448.7 799.7 448.7C799.7 448.7 785.9 456.1 757.2 462.1C728.5 468.1 746.1 467.1 713.5 466.7C680.9 466.3 689.5 467.1 659.5 460.8C629.5 454.5 643.1 456.1 623.5 447.9C603.9 439.7 600.8 436.3 600.8 436.3C600.8 436.3 622.2 424.8 622.2 424.8C622.2 424.8 591.3 397.2 591.3 397.2C591.3 397.2 563.0 413.2 563.0 413.2C563.0 413.2 550.2 401.6 550.2 401.6C550.2 401.6 578.5 383.6 578.5 383.6C578.5 383.6 555.3 355.3 555.3 355.3C555.3 355.3 534.7 365.6 534.7 365.6C534.7 365.6 529.5 359.6 525.7 346.3C521.9 333.0 524.0 330.2 523.2 325.7C522.4 321.2 522.8 336.5 523.2 332.9C523.6 329.3 521.9 328.1 524.3 315.0C526.7 301.9 525.4 309.1 530.4 293.6C535.4 278.1 531.6 284.1 539.3 268.6C547.0 253.1 541.1 260.8 553.6 247.1C566.1 233.4 576.8 227.5 576.8 227.5Z" fill="none" stroke="#d8791f" stroke-width="0.9"/>
<path d="M435.7 302.9C435.7 302.9 443.8 307.6 452.9 321.4C462.0 335.2 458.8 328.1 462.9 344.3C467.0 360.5 464.9 350.0 465.1 370.0C465.3 390.0 463.2 383.3 463.4 404.3C463.6 425.3 460.9 413.2 465.7 432.9C470.5 452.6 466.0 446.4 477.7 463.4C489.4 480.4 484.6 471.6 500.9 484.0C517.2 496.4 506.0 488.7 526.6 500.7C547.2 512.7 538.6 511.4 562.6 520.0C586.6 528.6 573.7 520.5 598.6 526.5C623.5 532.5 615.7 529.0 637.2 538.0C658.7 547.0 648.4 542.3 663.0 553.5C677.6 564.7 671.6 559.9 681.0 571.5C690.4 583.1 691.3 588.2 691.3 588.2C691.3 588.2 689.5 589.1 675.8 579.2C662.1 569.3 668.1 569.7 650.1 558.6C632.1 547.5 643.2 552.2 621.8 545.8C600.4 539.4 606.4 540.2 585.8 539.3C565.2 538.4 577.3 537.6 560.1 543.2C542.9 548.8 554.0 548.3 534.3 556.0C514.6 563.7 500.9 566.3 500.9 566.3C500.9 566.3 507.4 557.8 513.8 545.8C520.2 533.8 520.2 538.9 520.2 530.3C520.2 521.7 520.2 522.6 513.8 520.0C507.4 517.4 512.9 517.9 500.9 522.6C488.9 527.3 477.7 534.2 477.7 534.2C477.7 534.2 483.7 529.9 490.6 520.0C497.5 510.1 497.4 512.1 498.3 504.6C499.2 497.1 500.9 499.1 493.2 497.4C485.5 495.7 488.1 495.4 475.2 499.5C462.3 503.6 454.6 509.7 454.6 509.7C454.6 509.7 462.7 503.7 468.7 494.3C474.7 484.9 473.9 487.8 472.6 481.4C471.3 475.0 473.5 476.3 464.9 475.0C456.3 473.7 459.3 474.2 446.9 477.6C434.5 481.0 427.6 485.3 427.6 485.3C427.6 485.3 436.6 479.3 443.0 471.2C449.4 463.1 448.2 466.5 446.9 460.9C445.6 455.3 448.6 455.7 439.2 454.4C429.8 453.1 433.6 454.8 418.6 457.0C403.6 459.2 394.1 460.9 394.1 460.9C394.1 460.9 400.9 452.7 411.4 438.6C421.9 424.5 416.2 431.9 425.7 418.6C435.2 405.3 433.3 411.9 440.0 398.6C446.7 385.3 443.0 393.8 445.7 378.6C448.4 363.4 448.5 370.1 448.0 352.9C447.5 335.7 448.4 343.8 444.3 327.1C440.2 310.4 435.7 302.9 435.7 302.9Z" fill="url(#hD)" stroke="#d8791f" stroke-width="0.9"/>
<path d="M647.1 139.1L671.4 204.9L657.1 207.1L660.3 218.3L655.7 220.9L652.9 210.6L632.0 210.0Z" fill="#b85a1b" stroke="#b85a1b" stroke-width="0.6" stroke-linejoin="round"/><path d="M647.1 139.1L655.7 220.9L652.9 210.6L632.0 210.0Z" fill="#bf621f" /><path d="M647.1 139.1L655.7 220.9L652.9 210.6L632.0 210.0Z" fill="url(#hT)" fill-opacity="0.45"/><path d="M647.1 139.1L657.1 207.1" stroke="#a9511a" stroke-width="0.7"/><path d="M647.4 142.1L656.3 220.4" stroke="#a24c15" stroke-width="1.1"/><path d="M647.1 153.1L655.4 211.9" stroke="#d58a4a" stroke-width="0.8" stroke-dasharray="1.2 1.2"/>
<path d="M538.6 263.2L567.9 328.6L550.0 331.1L552.8 342.8L548.2 345.4L544.6 332.9L526.8 334.6Z" fill="#b85a1b" stroke="#b85a1b" stroke-width="0.6" stroke-linejoin="round"/><path d="M538.6 263.2L548.2 345.4L544.6 332.9L526.8 334.6Z" fill="#bf621f" /><path d="M538.6 263.2L548.2 345.4L544.6 332.9L526.8 334.6Z" fill="url(#hT)" fill-opacity="0.45"/><path d="M538.6 263.2L550.0 331.1" stroke="#a9511a" stroke-width="0.7"/><path d="M538.9 266.2L548.8 344.9" stroke="#a24c15" stroke-width="1.1"/><path d="M538.6 277.2L547.9 336.4" stroke="#d58a4a" stroke-width="0.8" stroke-dasharray="1.2 1.2"/>
<path d="M828.2 309.6L846.7 383.9L828.8 378.9L822.4 389.2L817.8 391.8L819.8 375.9L807.4 369.9Z" fill="#b85a1b" stroke="#b85a1b" stroke-width="0.6" stroke-linejoin="round"/><path d="M828.2 309.6L817.8 391.8L819.8 375.9L807.4 369.9Z" fill="#bf621f" /><path d="M828.2 309.6L817.8 391.8L819.8 375.9L807.4 369.9Z" fill="url(#hT)" fill-opacity="0.45"/><path d="M828.2 309.6L828.8 378.9" stroke="#a9511a" stroke-width="0.7"/><path d="M828.5 312.6L818.4 391.3" stroke="#a24c15" stroke-width="1.1"/><path d="M828.2 323.6L817.5 382.8" stroke="#d58a4a" stroke-width="0.8" stroke-dasharray="1.2 1.2"/>
<path d="M425.1 375.1L456.6 431.4L446.3 437.1L453.1 453.1L448.6 455.7L441.4 440.0L418.6 451.4Z" fill="#b85a1b" stroke="#b85a1b" stroke-width="0.6" stroke-linejoin="round"/><path d="M425.1 375.1L448.6 455.7L441.4 440.0L418.6 451.4Z" fill="#bf621f" /><path d="M425.1 375.1L448.6 455.7L441.4 440.0L418.6 451.4Z" fill="url(#hT)" fill-opacity="0.45"/><path d="M425.1 375.1L446.3 437.1" stroke="#a9511a" stroke-width="0.7"/><path d="M425.4 378.1L449.2 455.2" stroke="#a24c15" stroke-width="1.1"/><path d="M425.1 388.9L448.3 446.9" stroke="#d58a4a" stroke-width="0.8" stroke-dasharray="1.2 1.2"/>
<path d="M655.6 373.3L681.4 438.9L663.3 441.5L666.8 454.2L662.1 456.9L658.2 442.0L638.4 444.1Z" fill="#b85a1b" stroke="#b85a1b" stroke-width="0.6" stroke-linejoin="round"/><path d="M655.6 373.3L662.1 456.9L658.2 442.0L638.4 444.1Z" fill="#bf621f" /><path d="M655.6 373.3L662.1 456.9L658.2 442.0L638.4 444.1Z" fill="url(#hT)" fill-opacity="0.45"/><path d="M655.6 373.3L663.3 441.5" stroke="#a9511a" stroke-width="0.7"/><path d="M655.9 376.3L662.7 456.4" stroke="#a24c15" stroke-width="1.1"/><path d="M655.6 387.6L661.8 447.7" stroke="#d58a4a" stroke-width="0.8" stroke-dasharray="1.2 1.2"/>
<path d="M531.3 468.1L561.4 520.0L547.2 527.7L556.3 545.3L551.8 547.8L540.8 531.6L521.5 543.2Z" fill="#b85a1b" stroke="#b85a1b" stroke-width="0.6" stroke-linejoin="round"/><path d="M531.3 468.1L551.8 547.8L540.8 531.6L521.5 543.2Z" fill="#bf621f" /><path d="M531.3 468.1L551.8 547.8L540.8 531.6L521.5 543.2Z" fill="url(#hT)" fill-opacity="0.45"/><path d="M531.3 468.1L547.2 527.7" stroke="#a9511a" stroke-width="0.7"/><path d="M531.6 471.1L552.4 547.3" stroke="#a24c15" stroke-width="1.1"/><path d="M531.3 481.7L551.5 539.1" stroke="#d58a4a" stroke-width="0.8" stroke-dasharray="1.2 1.2"/>
<path d="M780.500 582.600L818.300 560.300" stroke="#2fa564" stroke-width="3.200"/>
<path d="M818 559.300L861.500 530M819 561.800L862.500 532.500" stroke="#2fa564" stroke-width="1"/>
<path d="M576 715L550.800 685" stroke="#00cc00" stroke-width="1.600"/><path d="M576 715L630 685.500" stroke="#cc0000" stroke-width="1.600"/><path d="M576 715L573 685" stroke="#0000a8" stroke-width="1.600"/></g>
</svg>
<div class="abs" style="left:-285px;top:-45px;width:1302px;height:700px">
<div class="abs" style="left:285.500px;top:45px;width:85.500px;height:393.500px;background:rgba(200,200,200,0.500)"></div>
<div class="abs" style="left:293.400px;top:54.600px;width:67.700px;height:67px;background:rgba(170,170,170,0.28)"></div>
<div class="abs" style="left:293.400px;top:105px;width:67.700px;height:16.600px;background:#8f8f8f"></div>
<div class="abs" style="left:293.400px;top:131.700px;width:67.700px;height:67.400px;background:rgba(170,170,170,0.28)"></div>
<div class="abs" style="left:290.500px;top:205.300px;width:74.200px;height:74.500px;border:1.500px solid #2f8fe8;border-radius:3.500px;background:rgba(170,170,170,0.25)"></div>
<div class="abs" style="left:293.400px;top:286.500px;width:67.700px;height:67.400px;background:rgba(190,190,190,0.12)"></div>
<div class="abs" style="left:293.400px;top:363.500px;width:67.700px;height:67.400px;background:rgba(60,60,60,0.42)"></div>
<svg width="32" height="30" style="left:312px;top:63.500px" viewBox="0 0 32 30"><g fill="none" stroke="#c3e6d0" stroke-width="1.600" stroke-linecap="round"><path d="M1 8V4C1 2 2 1 4 1H8M24 1H28C30 1 31 2 31 4V8M31 22V26C31 28 30 29 28 29H24M8 29H4C2 29 1 28 1 26V22"/></g><g fill="#c3e6d0"><rect x="9" y="14" width="2.600" height="9"/><rect x="14.800" y="8" width="2.600" height="15"/><rect x="20.600" y="12" width="2.600" height="11"/></g></svg>
<div class="t" style="left:309.0px;top:94.1px;font-size:9.5px;line-height:12px;transform:scaleX(0.919);transform-origin:0 50%;color:#bfe2cc;">All Plates</div>
<div class="t" style="left:317.4px;top:104.7px;font-size:9.5px;line-height:12px;transform:scaleX(0.924);transform-origin:0 50%;color:#82a892;">Stats</div>
<div class="t" style="left:299.8px;top:136.4px;font-size:11px;line-height:14px;color:#f6f6f6;">1</div>
<div class="t" style="left:299.8px;top:210.2px;font-size:11px;line-height:14px;color:#f6f6f6;">2</div>
<div class="t" style="left:299.8px;top:290.9px;font-size:11px;line-height:14px;color:#f6f6f6;">3</div>
<div class="t" style="left:299.8px;top:367.9px;font-size:11px;line-height:14px;color:#c8c8c8;">4</div>
<svg width="1302" height="700" viewBox="0 0 1302 700" style="left:0;top:0">
<g transform="translate(293 131)"><path d="M24.3 23.8L29.2 21.9L36.9 21.9L40.8 24.3L46.6 25.3L51.5 30.1L52.5 35L48.6 36.9L42.8 36L37.9 33L34 28.2L27.2 26.7Z" fill="#139a3c" stroke="#139a3c" stroke-width="0.6" stroke-linejoin="round"/><path d="M22.4 26.7L26.2 28.2L28.2 33L33 36.9L38.9 40.8L46.6 42.8L47.6 44.7L40.8 44.7L33 43.2L27.2 39.8L23.3 37.9L22.8 32.1Z" fill="#139a3c" stroke="#139a3c" stroke-width="0.6" stroke-linejoin="round"/><path d="M49.6 36L53.4 36L53.4 40.8L51.5 42.8L49.1 40.8Z" fill="#139a3c" stroke="#139a3c" stroke-width="0.6" stroke-linejoin="round"/><path d="M9.2 37.4L12.6 36.4L13.6 33.5L14.6 36.4L17.5 36.9L15.5 38.9L15.5 42.8L13.6 40.3L11.2 38.9Z" fill="#139a3c" stroke="#139a3c" stroke-width="0.6" stroke-linejoin="round"/><path d="M24.3 49.6L29.2 48.6L30.6 46.2L31.6 48.1L33.5 48.6L32.6 50.5L31.6 53.4L29.2 51Z" fill="#139a3c" stroke="#139a3c" stroke-width="0.6" stroke-linejoin="round"/><path d="M29.6 19.6L28.3 24.6L30.9 24.6Z" fill="#0a6a26"/><path d="M25.3 28.6L24 33.4L26.6 33.4Z" fill="#0a6a26"/><path d="M37.4 36.6L36.1 41.6L38.7 41.6Z" fill="#0a6a26"/><path d="M51 35.6L49.7 40.4L52.3 40.4Z" fill="#0a6a26"/><path d="M13.6 33.4L12.3 37.6L14.9 37.6Z" fill="#0a6a26"/><path d="M30.4 46L29.1 50L31.7 50Z" fill="#0a6a26"/></g>
<g transform="translate(293 209)"><path d="M31.1 16L30.1 22.4L33 27.2L38.9 31.1L44.7 33.5L50.5 33L55.4 30.6L48.6 35L42.8 34L36.9 31.1L32.1 26.7L29.6 23.3L29.2 19.4Z" fill="#139a3c" stroke="#139a3c" stroke-width="0.6" stroke-linejoin="round"/><path d="M34.5 17L32.6 21.5L31.6 20Z" fill="#139a3c" stroke="#139a3c" stroke-width="0.6" stroke-linejoin="round"/><path d="M25.3 23.8L23.3 29.2L24.3 33.5L28.2 36L27.2 37.4L32.1 37.4L32.1 39.8L38.9 40.3L46.6 38.9L41.8 38.4L36.9 36.4L32.1 32.6L28.2 31.1L26.2 28.2Z" fill="#139a3c" stroke="#139a3c" stroke-width="0.6" stroke-linejoin="round"/><path d="M15.5 30.6L18 35L18.5 38.9L16.5 41.8L19.4 42.3L20.4 43.7L22.8 44.2L23.8 45.7L26.2 45.7L26.7 48.1L31.1 45.7L36.9 46.2L40.3 48.1L36 44.7L30.1 44.2L24.3 42.8L20.9 39.8L19.9 35Z" fill="#139a3c" stroke="#139a3c" stroke-width="0.6" stroke-linejoin="round"/><path d="M31.1 16L29.9 22L32.3 22Z" fill="#0a6a26"/><path d="M25.3 24.3L24.1 32L26.5 32Z" fill="#0a6a26"/><path d="M47.6 28.7L46.4 33.5L48.8 33.5Z" fill="#0a6a26"/><path d="M35.5 34L34.3 38.4L36.7 38.4Z" fill="#0a6a26"/><path d="M18.5 36L17.3 40.8L19.7 40.8Z" fill="#0a6a26"/><path d="M28.4 41.3L27.2 46.2L29.6 46.2Z" fill="#0a6a26"/></g>
<g transform="translate(293 287)"><ellipse cx="14.6" cy="36.4" rx="4.400" ry="4.900" fill="#139a3c"/><ellipse cx="31.1" cy="48.600" rx="7.300" ry="2.900" fill="#139a3c"/><path d="M25.8 23.3L31.1 21.9L33 24.3L37.4 22.8L36 25.3L43.2 23.8L39.8 27.2L47.6 28.2L43.7 30.6L49.6 32.1L46.6 34.5L52.5 36.9L50.5 40.8L46.6 36.9L42.8 34L38.9 31.1L36.9 28.2L33 27.2L30.1 24.3Z" fill="#139a3c" stroke="#139a3c" stroke-width="0.6" stroke-linejoin="round"/><path d="M19 31.1L23.3 29.2L26.2 28.2L24.3 31.1L27.7 31.6L25.3 36.4L21.9 34Z" fill="#139a3c" stroke="#139a3c" stroke-width="0.6" stroke-linejoin="round"/><path d="M28.7 39.8L35 38.4L40.8 38.9L44.7 39.8L40.8 41.8L36.9 44.7L34 41.8L31.1 41.8Z" fill="#139a3c" stroke="#139a3c" stroke-width="0.6" stroke-linejoin="round"/><path d="M32.4 17.5L30.9 23.3L33.9 23.3Z" fill="#0a6a26"/><path d="M22.8 23.3L21.3 30.1L24.3 30.1Z" fill="#0a6a26"/><path d="M14.6 31.1L13.1 36.9L16.1 36.9Z" fill="#0a6a26"/><path d="M38.9 34.5L37.4 40.3L40.4 40.3Z" fill="#0a6a26"/><path d="M50.5 31.6L49 38.4L52 38.4Z" fill="#0a6a26"/><path d="M31.1 41.8L29.6 48.1L32.6 48.1Z" fill="#0a6a26"/></g>
<g transform="translate(293 364)"><path d="M26.7 24.3L31.1 20.9L36 19L39.4 19.9L38.4 22.8L34 25.8L30.6 27.7L33 23.3L29.2 24.3Z" fill="#0f7f31" stroke="#0f7f31" stroke-width="0.6" stroke-linejoin="round"/><path d="M38.9 33.5L43.7 29.2L48.6 27.2L51.5 28.7L50 32.1L45.7 34.5L41.8 36L45.7 31.6L40.8 33.5Z" fill="#0f7f31" stroke="#0f7f31" stroke-width="0.6" stroke-linejoin="round"/><path d="M16 31.1L22.4 29.6L29.2 29.2L30.1 32.1L32.6 36.4L27.2 33.5L21.4 33Z" fill="#0f7f31" stroke="#0f7f31" stroke-width="0.6" stroke-linejoin="round"/><path d="M6.3 37.4L12.6 36L18.5 37.4L22.4 38.9L25.3 41.8L29.2 43.7L32.1 46.6L31.1 53L28.2 51L25.3 50.5L22.4 46.6L18.5 43.7L16.5 40.8L11.7 39.4Z" fill="#0f7f31" stroke="#0f7f31" stroke-width="0.6" stroke-linejoin="round"/><path d="M34 37.9L38.9 37.4L43.7 39.4L43.7 43.7L41.3 49.1L38.9 45.7L36.9 41.3Z" fill="#0f7f31" stroke="#0f7f31" stroke-width="0.6" stroke-linejoin="round"/><path d="M36 14.6L34.5 20.9L37.5 20.9Z" fill="#085a20"/><path d="M48.1 22.8L46.6 29.2L49.6 29.2Z" fill="#085a20"/><path d="M25.6 25.8L24.1 31.6L27.1 31.6Z" fill="#085a20"/><path d="M14.4 31.1L12.9 37.4L15.9 37.4Z" fill="#085a20"/><path d="M40.1 35.5L38.6 41.8L41.6 41.8Z" fill="#085a20"/><path d="M28.2 42.3L26.7 48.1L29.7 48.1Z" fill="#085a20"/></g>
</svg>
<div class="abs" style="left:987px;top:45px;width:231px;height:22px;background:#2b2c2d"></div>
<svg width="10" height="10" style="left:995px;top:51px" viewBox="0 0 10 10"><g fill="none" stroke="#e0e0e0" stroke-width="1" stroke-linecap="round" stroke-linejoin="round"><path d="M1 2L5 4.800L9 2M1 5.200L5 8L9 5.200"/></g></svg>
<div class="t" style="left:1013.4px;top:50.2px;font-size:9.5px;line-height:12px;transform:scaleX(0.877);transform-origin:0 50%;font-weight:bold;color:#fff;">Color Scheme</div>
<div class="abs" style="left:1076px;top:50.500px;width:133.500px;height:14px;background:#1e1f20;border:1px solid #3c3d3e;border-radius:2px"></div>
<svg width="9" height="6" style="left:1079.500px;top:56px" viewBox="0 0 9 6"><path d="M1 1.500L4.500 4L8 1.500" stroke="#fff" stroke-width="1" fill="none" stroke-linecap="round"/></svg>
<div class="t" style="left:1092.6px;top:52.6px;font-size:9.5px;line-height:12px;transform:scaleX(0.939);transform-origin:0 50%;color:#f0f0f0;">Line Type</div>
<div class="abs" style="left:1271.300px;top:130px;width:15.700px;height:380px;background:#fff;border-radius:8px"></div>
<div class="abs" style="left:1275.200px;top:136px;width:8.100px;height:374px;background:#00ae42"></div>
<svg width="20" height="20" style="left:1269px;top:125.200px" viewBox="0 0 20 20"><circle cx="10" cy="10" r="8.100" fill="#fff"/><circle cx="10" cy="10" r="6.900" fill="#00ae42"/><path d="M6 10H14M10 6V14" stroke="#fff" stroke-width="1"/></svg>
<svg width="40" height="30" style="left:1235px;top:110px" viewBox="0 0 40 30"><path d="M2.200 2H28.400C29.300 2 29.900 2.600 29.900 3.500V21L34 24.900H2.200C1.300 24.900 0.700 24.300 0.700 23.400V3.500C0.700 2.600 1.300 2 2.200 2Z" fill="#fff"/></svg>
<div class="t" style="left:1243.9px;top:112.6px;font-size:9.5px;line-height:12px;transform:scaleX(0.934);transform-origin:0 50%;color:#22b157;">244</div>
<div class="t" style="left:1239.2px;top:122.7px;font-size:9.5px;line-height:12px;transform:scaleX(0.917);transform-origin:0 50%;color:#22b157;">48.80</div>
<div class="abs" style="left:490.800px;top:668.800px;width:790px;height:16.200px;background:#fff;border-radius:8.100px"></div>
<div class="abs" style="left:494.600px;top:673px;width:782px;height:8.200px;background:#00ae42;border-radius:4.100px"></div>
</div>
</div>
<div class="abs" style="left:1044.8px;top:494.7px;width:245.4px;height:195px;border-radius:5px 5px 6px 6px;background:#1f2222;box-shadow:0 2px 9px rgba(0,0,0,0.320);overflow:hidden">
<svg width="245.4" height="122.500" viewBox="0 0 1302 647" preserveAspectRatio="none" style="left:0;top:0;overflow:hidden">
<rect width="1302" height="647" fill="#e8e8e8"/>
<use href="#geo"/><use href="#geo2"/>
<rect x="285" y="45" width="86" height="394" fill="#c8c8c8" fill-opacity="0.500"/>
<rect x="293" y="105" width="68" height="17" fill="#8f8f8f"/><rect x="290" y="205" width="75" height="75" fill="#d2d6dc" stroke="#2f8fe8" stroke-width="5"/><rect x="293" y="363" width="68" height="68" fill="#3c3c3c" fill-opacity="0.420"/>
<g fill="#12953a"><ellipse cx="328" cy="168" rx="18" ry="12"/><ellipse cx="327" cy="244" rx="16" ry="12"/><ellipse cx="322" cy="323" rx="18" ry="13"/><ellipse cx="328" cy="398" rx="18" ry="13"/></g>
<rect width="1302" height="21" fill="#23292b"/><rect y="21" width="1302" height="24" fill="#3b4446"/><rect x="120" y="21" width="92" height="24" fill="#00ae42"/>
<g fill="#00ae42"><rect x="987" y="25" width="85" height="16" rx="8"/><rect x="1082" y="25" width="18" height="16" rx="8"/><rect x="1183" y="25" width="93" height="16" rx="8"/></g><rect x="1100" y="25" width="73" height="16" rx="6" fill="#6b6b6b"/>
<g fill="#e0e4e4"><rect x="45" y="29" width="58" height="8"/><rect x="232" y="29" width="52" height="8"/><rect x="325" y="29" width="52" height="8"/><rect x="409" y="29" width="70" height="8"/><rect x="634" y="7" width="106" height="7" fill-opacity="0.700"/><rect x="137" y="29" width="58" height="8" fill="#fff"/></g>
<rect x="0" y="45" width="284" height="602" fill="#fff"/>
<g fill="#f3f3f3"><rect y="46" width="284" height="20"/><rect y="129" width="284" height="22"/><rect y="193" width="284" height="21"/></g>
<g fill="#8d9394" fill-opacity="0.600"><rect x="24" y="51" width="32" height="8"/><rect x="16" y="81" width="118" height="8"/><rect x="7" y="103" width="47" height="8"/><rect x="82" y="103" width="86" height="8" fill="#b9bdbd"/><rect x="24" y="136" width="40" height="8"/><rect x="36" y="168" width="70" height="8"/><rect x="26" y="199" width="36" height="8"/><rect x="180" y="199" width="46" height="8"/><rect x="34" y="226" width="130" height="8"/><rect x="11" y="253" width="35" height="9" fill="#40484a"/><rect x="67" y="254" width="42" height="7" fill="#b9bdbd"/><rect x="130" y="254" width="38" height="7" fill="#b9bdbd"/><rect x="190" y="254" width="32" height="7" fill="#b9bdbd"/><rect x="4" y="277" width="75" height="9" fill="#40484a"/><rect x="17" y="299" width="58" height="8"/><rect x="17" y="319" width="85" height="8"/><rect x="4" y="342" width="40" height="9" fill="#40484a"/><rect x="17" y="364" width="66" height="8"/><rect x="4" y="387" width="62" height="9" fill="#40484a"/><rect x="17" y="409" width="97" height="8"/><rect x="17" y="421" width="38" height="8"/><rect x="17" y="441" width="125" height="8"/></g>
<g fill="#00ae42"><rect x="71" y="196" width="36" height="14" rx="7"/><rect x="5" y="165" width="14" height="14"/><rect x="9" y="264" width="39" height="3"/></g><rect x="107" y="196" width="34" height="14" rx="7" fill="#d4d4d4"/>
<g fill="none" stroke="#d0d0d0" stroke-width="3"><rect x="166" y="295" width="81" height="17"/><rect x="166" y="315" width="81" height="17"/><rect x="166" y="360" width="81" height="17"/><rect x="166" y="410" width="81" height="17"/><rect x="2" y="77" width="258" height="17"/><rect x="68" y="98" width="210" height="19"/><rect x="22" y="164" width="242" height="17"/><rect x="19" y="222" width="220" height="18"/></g>
<rect x="935" y="45" width="283" height="313" fill="#3a3b3c"/><rect x="935" y="280" width="283" height="6" fill="#8a8a8a"/>
<rect x="942" y="78.0" width="7" height="8" fill="#f2b34a"/>
<rect x="954" y="78.0" width="70" height="7" fill="#cfcfcf" fill-opacity="0.850"/>
<rect x="1052" y="78.0" width="26" height="7" fill="#cfcfcf" fill-opacity="0.700"/><rect x="1092" y="78.0" width="26" height="7" fill="#cfcfcf" fill-opacity="0.700"/><rect x="1132" y="78.0" width="52" height="7" fill="#cfcfcf" fill-opacity="0.700"/>
<rect x="1192" y="78.0" width="7" height="7" fill="#22b157"/>
<rect x="942" y="95.4" width="7" height="8" fill="#e98b2a"/>
<rect x="954" y="95.4" width="52" height="7" fill="#cfcfcf" fill-opacity="0.850"/>
<rect x="1052" y="95.4" width="26" height="7" fill="#cfcfcf" fill-opacity="0.700"/><rect x="1092" y="95.4" width="26" height="7" fill="#cfcfcf" fill-opacity="0.700"/><rect x="1132" y="95.4" width="52" height="7" fill="#cfcfcf" fill-opacity="0.700"/>
<rect x="1192" y="95.4" width="7" height="7" fill="#22b157"/>
<rect x="942" y="112.8" width="7" height="8" fill="#c44a8a"/>
<rect x="954" y="112.8" width="92" height="7" fill="#cfcfcf" fill-opacity="0.850"/>
<rect x="1052" y="112.8" width="26" height="7" fill="#cfcfcf" fill-opacity="0.700"/><rect x="1092" y="112.8" width="26" height="7" fill="#cfcfcf" fill-opacity="0.700"/><rect x="1132" y="112.8" width="52" height="7" fill="#cfcfcf" fill-opacity="0.700"/>
<rect x="1192" y="112.8" width="7" height="7" fill="#22b157"/>
<rect x="942" y="130.2" width="7" height="8" fill="#8a2be2"/>
<rect x="954" y="130.2" width="64" height="7" fill="#cfcfcf" fill-opacity="0.850"/>
<rect x="1052" y="130.2" width="26" height="7" fill="#cfcfcf" fill-opacity="0.700"/><rect x="1092" y="130.2" width="26" height="7" fill="#cfcfcf" fill-opacity="0.700"/><rect x="1132" y="130.2" width="52" height="7" fill="#cfcfcf" fill-opacity="0.700"/>
<rect x="1192" y="130.2" width="7" height="7" fill="#22b157"/>
<rect x="942" y="147.6" width="7" height="8" fill="#3a6fe0"/>
<rect x="954" y="147.6" width="86" height="7" fill="#cfcfcf" fill-opacity="0.850"/>
<rect x="1052" y="147.6" width="26" height="7" fill="#cfcfcf" fill-opacity="0.700"/><rect x="1092" y="147.6" width="26" height="7" fill="#cfcfcf" fill-opacity="0.700"/><rect x="1132" y="147.6" width="52" height="7" fill="#cfcfcf" fill-opacity="0.700"/>
<rect x="1192" y="147.6" width="7" height="7" fill="#22b157"/>
<rect x="942" y="165.0" width="7" height="8" fill="#d9d9d9"/>
<rect x="954" y="165.0" width="48" height="7" fill="#cfcfcf" fill-opacity="0.850"/>
<rect x="1052" y="165.0" width="26" height="7" fill="#cfcfcf" fill-opacity="0.700"/><rect x="1092" y="165.0" width="26" height="7" fill="#cfcfcf" fill-opacity="0.700"/><rect x="1132" y="165.0" width="52" height="7" fill="#cfcfcf" fill-opacity="0.700"/>
<rect x="1192" y="165.0" width="7" height="7" fill="#22b157"/>
<rect x="942" y="182.4" width="7" height="8" fill="#57c26a"/>
<rect x="954" y="182.4" width="56" height="7" fill="#cfcfcf" fill-opacity="0.850"/>
<rect x="1052" y="182.4" width="26" height="7" fill="#cfcfcf" fill-opacity="0.700"/><rect x="1092" y="182.4" width="26" height="7" fill="#cfcfcf" fill-opacity="0.700"/><rect x="1132" y="182.4" width="52" height="7" fill="#cfcfcf" fill-opacity="0.700"/>
<rect x="1192" y="182.4" width="7" height="7" fill="#22b157"/>
<rect x="942" y="199.8" width="7" height="8" fill="#c24ad0"/>
<rect x="954" y="199.8" width="40" height="7" fill="#cfcfcf" fill-opacity="0.850"/>
<rect x="1052" y="199.8" width="26" height="7" fill="#cfcfcf" fill-opacity="0.700"/><rect x="1092" y="199.8" width="26" height="7" fill="#cfcfcf" fill-opacity="0.700"/><rect x="1132" y="199.8" width="52" height="7" fill="#cfcfcf" fill-opacity="0.700"/>
<rect x="1192" y="199.8" width="7" height="7" fill="#22b157"/>
<rect x="942" y="217.2" width="7" height="8" fill="#e9d43a"/>
<rect x="954" y="217.2" width="44" height="7" fill="#cfcfcf" fill-opacity="0.850"/>
<rect x="1192" y="217.2" width="7" height="7" fill="#22b157"/>
<rect x="942" y="234.6" width="7" height="8" fill="#e9573a"/>
<rect x="954" y="234.6" width="36" height="7" fill="#cfcfcf" fill-opacity="0.850"/>
<rect x="1192" y="234.6" width="7" height="7" fill="#22b157"/>
<rect x="942" y="252.0" width="7" height="8" fill="#9a9a9a"/>
<rect x="954" y="252.0" width="44" height="7" fill="#cfcfcf" fill-opacity="0.850"/>
<rect x="1192" y="252.0" width="7" height="7" fill="#22b157"/>
<g fill="#d8d8d8" fill-opacity="0.800"><rect x="944" y="52" width="60" height="8"/><rect x="1040" y="52" width="70" height="8"/><rect x="944" y="66" width="40" height="6"/><rect x="1052" y="66" width="26" height="6"/><rect x="1092" y="66" width="30" height="6"/><rect x="1132" y="66" width="48" height="6"/><rect x="1190" y="66" width="24" height="6"/><rect x="942" y="268" width="70" height="8"/><rect x="942" y="292" width="60" height="7"/><rect x="1040" y="292" width="70" height="7"/><rect x="942" y="306" width="58" height="7"/><rect x="1040" y="306" width="40" height="7"/><rect x="942" y="320" width="30" height="7"/><rect x="1040" y="320" width="16" height="7"/><rect x="942" y="334" width="80" height="7"/><rect x="1040" y="334" width="30" height="7"/><rect x="942" y="347" width="66" height="7"/><rect x="1040" y="347" width="30" height="7"/></g>
<rect x="940" y="361" width="278" height="290" fill="#f4f4f4"/>
<rect x="950" y="405" width="258" height="130" fill="#fafafa"/><g fill="#22b157"><path d="M955 372L985 385L965 400L985 395L1000 420L1010 400L990 380Z" fill-opacity="0.700"/><rect x="950" y="548" width="150" height="8"/><ellipse cx="1030" cy="510" rx="20" ry="14" fill-opacity="0.600"/><ellipse cx="1110" cy="516" rx="26" ry="10" fill-opacity="0.500"/></g>
<g fill="#5a6a7a"><rect x="1042" y="446" width="50" height="36" fill="#fff" stroke="#9aa" stroke-width="2"/><path d="M1105 440C1120 430 1130 445 1126 462L1134 520H1116L1112 480L1102 520H1094L1100 470Z"/><circle cx="1118" cy="438" r="9" fill="#3a4a5a"/></g>
<g fill="#9aa0a2"><rect x="950" y="562" width="230" height="6"/><rect x="950" y="573" width="170" height="6"/><rect x="950" y="584" width="120" height="6"/><rect x="1080" y="584" width="40" height="6" fill="#4a8fe0"/><rect x="950" y="630" width="30" height="6"/><rect x="1120" y="626" width="14" height="10"/><rect x="1142" y="626" width="14" height="10"/><rect x="1164" y="626" width="14" height="10"/></g>
<rect x="1271" y="130" width="16" height="500" rx="8" fill="#fff"/><rect x="1275" y="136" width="8" height="488" fill="#00ae42"/><rect x="1236" y="112" width="30" height="23" fill="#fff"/><rect x="1236" y="610" width="30" height="23" fill="#fff"/><rect x="1243" y="116" width="16" height="14" fill="#7fd39d"/><rect x="1243" y="614" width="16" height="14" fill="#7fd39d"/>
</svg>
<div class="abs" style="left:0;top:122.500px;width:245.4px;height:73px;background:linear-gradient(180deg,#1f2323 0%,#212626 100%)"></div>
</div>
<svg width="13" height="13" style="left:1054px;top:626.300px" viewBox="0 0 13 13"><rect x="0.500" y="0.500" width="9" height="9" rx="1" fill="#f4f4f4"/><rect x="1.800" y="1.800" width="6.400" height="6.400" fill="#e8563a"/><rect x="3" y="3" width="4" height="4" fill="#f7c9b8"/><path d="M0.500 3H9.500M3 0.500V9.500" stroke="#f4f4f4" stroke-width="0.800"/><path d="M7 12.500L9.800 7L12.800 9.800Z" fill="#3a96dd"/><circle cx="10.200" cy="9.400" r="2" fill="#3a96dd"/></svg>
<div class="t" style="left:1071.7px;top:626.8px;font-size:9.8px;line-height:13px;transform:scaleX(0.849);transform-origin:0 50%;color:#fff;">Snipping Tool</div>
<svg width="10" height="4" style="left:1241.500px;top:631px" viewBox="0 0 10 4"><g fill="#d8d8d8"><circle cx="1.300" cy="2" r="0.900"/><circle cx="5" cy="2" r="0.900"/><circle cx="8.700" cy="2" r="0.900"/></g></svg>
<svg width="9" height="9" style="left:1268.700px;top:628.400px" viewBox="0 0 9 9"><path d="M1 1L8 8M8 1L1 8" stroke="#fff" stroke-width="1" stroke-linecap="round"/></svg>
<div class="t" style="left:1055.2px;top:652.2px;font-size:10px;line-height:13px;transform:scaleX(0.942);transform-origin:0 50%;color:#fff;">Screenshot copied to clipboard and saved</div>
<div class="t" style="left:1055.2px;top:664.9px;font-size:10px;line-height:13px;transform:scaleX(0.929);transform-origin:0 50%;color:#cfcfcf;">Select here to mark up and share.</div>
</body>
</html>
